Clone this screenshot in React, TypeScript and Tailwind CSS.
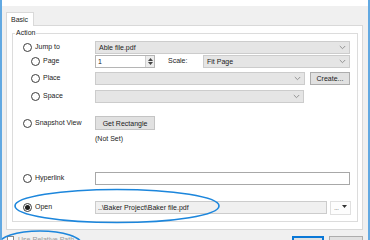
import React from "react";

const Radio = ({ checked = false }: { checked?: boolean }) => (
  <span className="w-[9px] h-[9px] rounded-full border border-[#3c3c3c] bg-white flex items-center justify-center shrink-0">
    {checked && <span className="w-[5px] h-[5px] rounded-full bg-[#1f1f1f]" />}
  </span>
);

const Chevron = () => (
  <svg width="7" height="5" viewBox="0 0 7 5" className="shrink-0">
    <path d="M0.8 1 L3.5 3.7 L6.2 1" fill="none" stroke="#8a8a8a" strokeWidth="0.9" />
  </svg>
);

const Combo = ({ text = "", w }: { text?: string; w: string }) => (
  <div className={`${w} h-[13px] bg-[#e5e5e5] border border-[#cccccc] flex items-center justify-between pl-[3px] pr-[3px]`}>
    <span className="leading-none">{text}</span>
    <Chevron />
  </div>
);

const Label = ({ children, indent }: { children: React.ReactNode; indent: string }) => (
  <div className={`w-[82px] shrink-0 flex items-center gap-[3px] ${indent}`}>
    {children}
  </div>
);

export default function App() {
  return (
    <div
      className="relative w-[370px] h-[240px] overflow-hidden bg-[#f0f0f0] border-l-2 border-r-2 border-[#62a9e2] text-[7px] text-[#1b1b1b]"
      style={{ fontFamily: '"Liberation Sans", Arial, sans-serif' }}
    >
      <div className="h-[6px] bg-white" />
      {/* Tab */}
      <div className="mt-[6px] ml-[4px] flex">
        <div className="relative z-10 w-[28px] h-[14px] -mb-px bg-white border-t border-l border-r border-[#d9d9d9] flex items-center pl-[4px]">
          <span className="leading-none">Basic</span>
        </div>
      </div>
      {/* Panel */}
      <div className="ml-[4px] w-[357px] bg-white border border-[#d9d9d9] pt-[7px] pb-[7px] pl-[5px]">
        {/* Group box */}
        <div className="relative w-[346px] border border-[#dcdcdc] pb-[7px] pr-[6px] flex flex-col">
          <span className="absolute -top-[5px] left-[2px] bg-white px-[1px] leading-none">Action</span>

          {/* Jump to */}
          <div className="mt-[7px] h-[13px] flex items-center">
            <Label indent="pl-[10px]"><Radio /><span>Jump to</span></Label>
            <Combo text="Able file.pdf" w="w-[255px]" />
          </div>

          {/* Page */}
          <div className="mt-[1px] h-[13px] flex items-center">
            <Label indent="pl-[18px]"><Radio /><span>Page</span></Label>
            <div className="w-[60px] h-[13px] bg-white border border-[#b5b5b5] flex items-center justify-between pl-[2px]">
              <span className="leading-none">1</span>
              <div className="w-[9px] h-full bg-[#ececec] border-l border-[#d0d0d0] flex flex-col items-center justify-center gap-[1px]">
                <svg width="5" height="3" viewBox="0 0 5 3"><path d="M0 3 L2.5 0 L5 3 Z" fill="#444" /></svg>
                <svg width="5" height="3" viewBox="0 0 5 3"><path d="M0 0 L2.5 3 L5 0 Z" fill="#444" /></svg>
              </div>
            </div>
            <span className="ml-[13px] w-[35px]">Scale:</span>
            <Combo text="Fit Page" w="w-[147px]" />
          </div>

          {/* Place */}
          <div className="mt-[4px] h-[13px] flex items-center">
            <Label indent="pl-[18px]"><Radio /><span>Place</span></Label>
            <Combo w="w-[210px]" />
            <div className="ml-[5px] w-[40px] h-[13px] bg-[#e1e1e1] border border-[#adadad] flex items-center justify-center">
              <span className="leading-none">Create...</span>
            </div>
          </div>

          {/* Space */}
          <div className="mt-[5px] h-[13px] flex items-center">
            <Label indent="pl-[18px]"><Radio /><span>Space</span></Label>
            <Combo w="w-[209px]" />
          </div>

          {/* Snapshot */}
          <div className="mt-[13px] h-[14px] flex items-center">
            <Label indent="pl-[10px]"><Radio /><span>Snapshot View</span></Label>
            <div className="w-[60px] h-[14px] bg-[#e1e1e1] border border-[#c4c4c4] flex items-center justify-center">
              <span className="leading-none">Get Rectangle</span>
            </div>
          </div>
          <div className="mt-[3px] h-[10px] flex items-center pl-[82px]">
            <span className="leading-none">(Not Set)</span>
          </div>

          {/* Hyperlink */}
          <div className="mt-[29px] h-[13px] flex items-center">
            <Label indent="pl-[10px]"><Radio /><span>Hyperlink</span></Label>
            <div className="w-[255px] h-[13px] bg-white border border-[#a8a8a8]" />
          </div>

          {/* Open */}
          <div className="mt-[16px] h-[13px] flex items-center">
            <Label indent="pl-[10px]"><Radio checked /><span>Open</span></Label>
            <div className="w-[234px] h-[13px] bg-[#f0f0f0] border border-[#cccccc] flex items-center pl-[2px]">
              <span className="leading-none">..\Baker Project\Baker file.pdf</span>
            </div>
            <div className="ml-[3px] w-[21px] h-[14px] bg-[#fdfdfd] border border-[#e0e0e0] flex items-center justify-between px-[3px]">
              <span className="leading-none text-[6px] tracking-[-0.5px] mt-[2px]">···</span>
              <svg width="5" height="3" viewBox="0 0 5 3" className="-mt-[3px]"><path d="M0 0 L2.5 3 L5 0 Z" fill="#333" /></svg>
            </div>
          </div>
        </div>
      </div>

      {/* Bottom row */}
      <div className="mt-[6px] flex items-start">
        <div className="ml-[5px] flex items-center gap-[4px]">
          <span className="w-[7px] h-[7px] bg-white border border-[#8a8a8a]" />
          <span className="leading-none text-[#9a9a9a]">Use Relative Path</span>
        </div>
        <div className="ml-auto mr-[5px] flex gap-[5px]">
          <div className="w-[32px] h-[14px] bg-[#e1e1e1] border-2 border-[#0a78d7] flex items-center justify-center">
            <span className="leading-none">OK</span>
          </div>
          <div className="w-[34px] h-[14px] bg-[#e1e1e1] border border-[#adadad] flex items-center justify-center">
            <span className="leading-none">Cancel</span>
          </div>
        </div>
      </div>

      {/* Annotation ellipses */}
      <svg className="absolute left-0 top-0 pointer-events-none" width="370" height="240" viewBox="0 0 370 240">
        <ellipse cx="115" cy="206" rx="102" ry="16.5" fill="none" stroke="#1c86dc" strokeWidth="1.6" />
        <ellipse cx="38" cy="245" rx="42" ry="14" fill="none" stroke="#1c86dc" strokeWidth="1.6" />
      </svg>
    </div>
  );
}
